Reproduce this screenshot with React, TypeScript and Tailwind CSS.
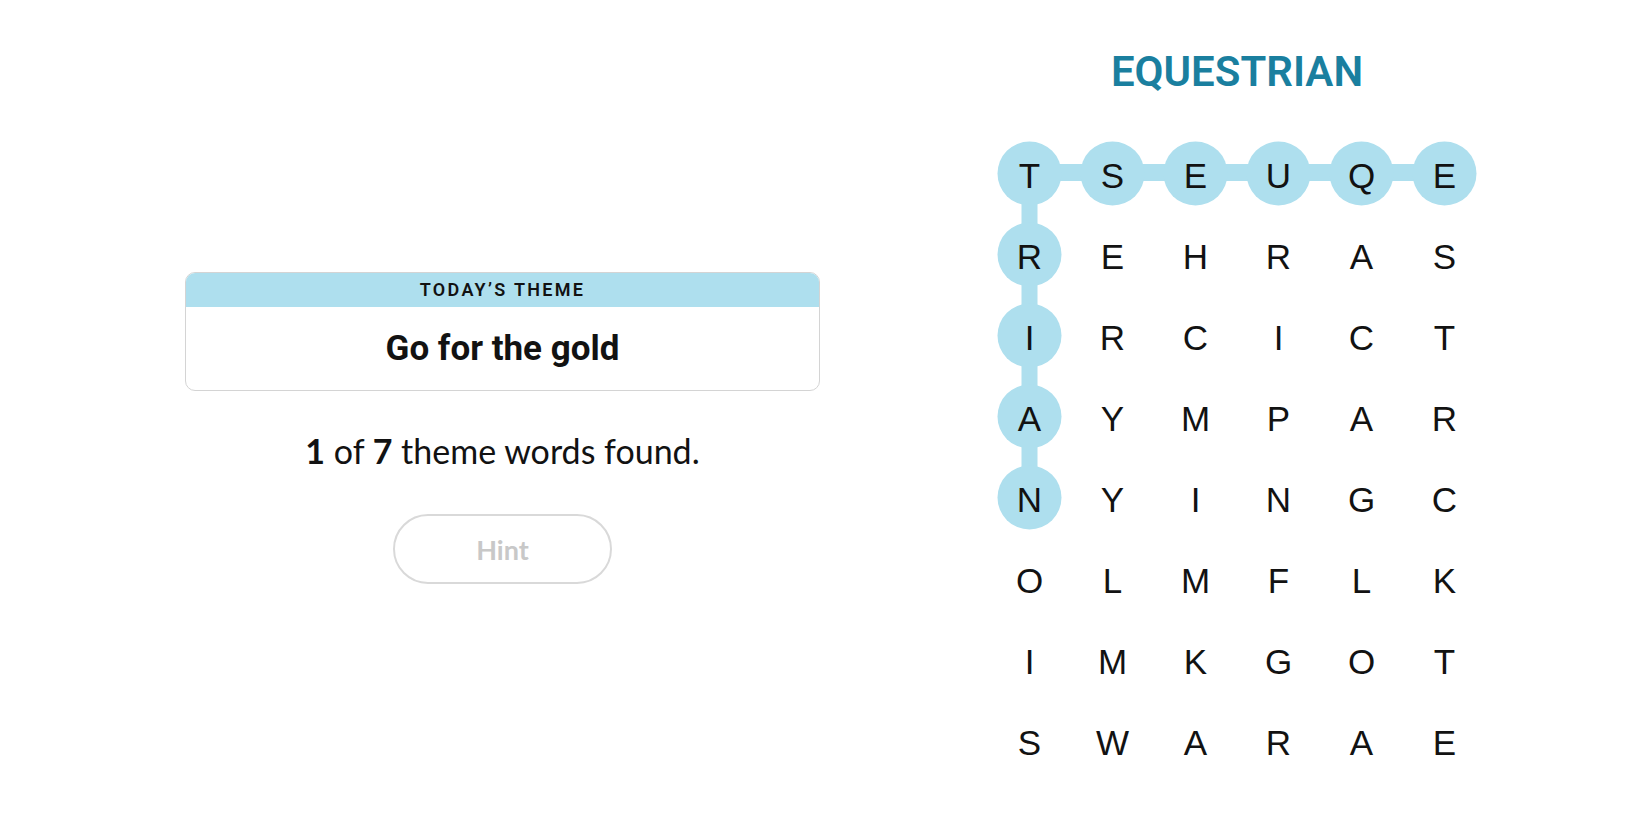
import React from "react";

const GRID = [
  "TSEUQE",
  "REHRAS",
  "IRCICT",
  "AYMPAR",
  "NYINGC",
  "OLMFLK",
  "IMKGOT",
  "SWARAE",
];

const FOUND: [number, number][] = [
  [0, 0], [0, 1], [0, 2], [0, 3], [0, 4], [0, 5],
  [1, 0], [2, 0], [3, 0], [4, 0],
];

const CW = 83;
const RH = 81;
const cx = (c: number) => CW / 2 + CW * c;
const cy = (r: number) => RH / 2 + RH * r;

function Board() {
  return (
    <div className="relative w-[498px] h-[648px]">
      <svg className="absolute inset-0" width={498} height={648} viewBox="0 0 498 648">
        <line x1={cx(0)} y1={cy(0) - 1} x2={cx(5)} y2={cy(0) - 1} stroke="#aedfee" strokeWidth={17} />
        <line x1={cx(0)} y1={cy(0)} x2={cx(0)} y2={cy(4)} stroke="#aedfee" strokeWidth={16} />
        {FOUND.map(([r, c]) => (
          <circle key={`${r}-${c}`} cx={cx(c)} cy={cy(r)} r={32} fill="#aedfee" />
        ))}
      </svg>
      <div className="relative grid grid-cols-6 grid-rows-8 w-[498px] h-[648px]">
        {GRID.map((row, r) =>
          row.split("").map((ch, c) => (
            <div key={`${r}-${c}`} className="flex items-center justify-center">
              <span className="font-['Liberation_Sans',Arial,sans-serif] text-[35px] leading-none text-[#121212] translate-y-[2px]">
                {ch}
              </span>
            </div>
          ))
        )}
      </div>
    </div>
  );
}

export default function App() {
  return (
    <div className="w-[1650px] h-[825px] bg-white flex overflow-hidden">
      <div className="ml-[185px] w-[635px] pt-[272px] flex flex-col items-center">
        <div className="w-[635px] h-[119px] border border-[#d4d4d4] rounded-[10px] overflow-hidden flex flex-col">
          <div className="h-[34px] bg-[#aedfee] flex items-center justify-center">
            <span className="font-['Roboto',sans-serif] font-semibold text-[18px] tracking-[2.3px] text-[#121212] leading-none">
              TODAY’S THEME
            </span>
          </div>
          <div className="flex-1 flex items-center justify-center">
            <span className="font-['Roboto',sans-serif] font-bold text-[35px] leading-none text-[#121212]">
              Go for the gold
            </span>
          </div>
        </div>
        <p className="mt-[40px] font-['Lato',sans-serif] text-[34px] leading-[40px] text-[#121212] whitespace-nowrap">
          <span className="font-bold">1</span> of <span className="font-bold">7</span> theme words found.
        </p>
        <button className="mt-[43px] w-[219px] h-[70px] rounded-full border-2 border-[#d9d9d9] bg-white flex items-center justify-center">
          <span className="font-['Lato',sans-serif] font-bold text-[27px] text-[#c8c8c8] leading-none">Hint</span>
        </button>
      </div>
      <div className="ml-[168px] w-[498px] flex flex-col items-center">
        <div className="mt-[47px] h-[50px] font-['Roboto',sans-serif] font-semibold text-[42px] leading-[50px] text-[#1a7f9f]">
          EQUESTRIAN
        </div>
        <div className="mt-[36px]">
          <Board />
        </div>
      </div>
    </div>
  );
}
